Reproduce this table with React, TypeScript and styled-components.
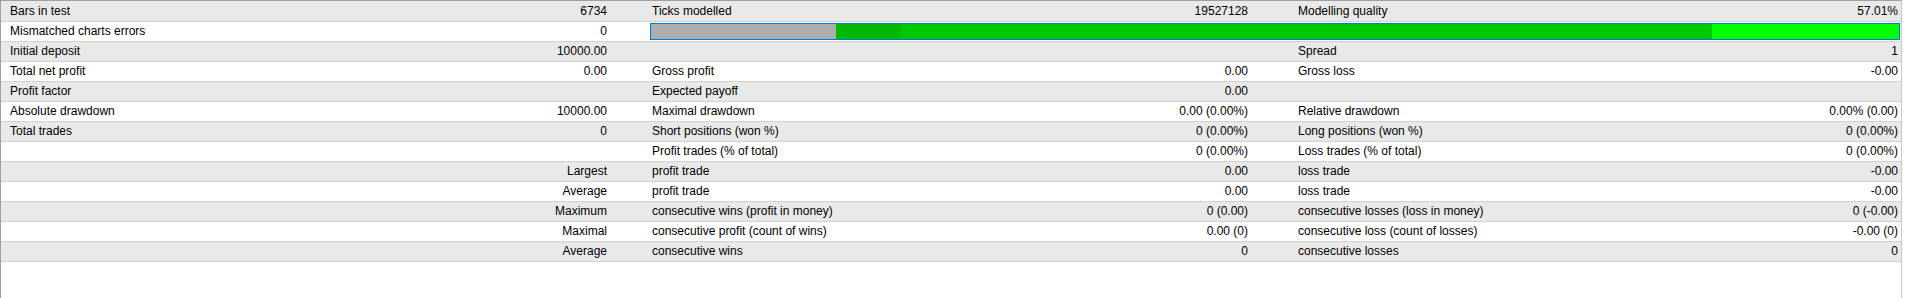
import React from "react";
import styled, { createGlobalStyle } from "styled-components";

const GlobalStyle = createGlobalStyle`
  html, body {
    margin: 0;
    padding: 0;
    background: #ffffff;
  }
  body {
    font-family: "Liberation Sans", Arial, sans-serif;
    font-size: 12px;
    color: #000000;
  }
`;

const Frame = styled.div`
  box-sizing: border-box;
  width: 1902px;
  height: 298px;
  background: #ffffff;
  border-left: 1px solid #a0a0a0;
  border-top: 1px solid #a0a0a0;
  border-right: 1px solid #c8c8c8;
  overflow: hidden;
`;

const Row = styled.div<{ $shaded: boolean }>`
  box-sizing: border-box;
  display: grid;
  grid-template-columns: 645px 646px 1fr;
  height: 20px;
  border-bottom: 1px solid #d2d2d2;
  background: ${(p) => (p.$shaded ? "#e9e9e9" : "#ffffff")};
  line-height: 19px;
  white-space: nowrap;

  &:first-child {
    height: 21px;
    padding-top: 1px;
  }
`;

const groupPad = [
  { l: 9, r: 39 },
  { l: 6, r: 44 },
  { l: 6, r: 3 },
];

const Group = styled.div<{ $col: number }>`
  display: flex;
  justify-content: space-between;
  align-items: center;
  min-width: 0;
  padding-left: ${(p) => groupPad[p.$col].l}px;
  padding-right: ${(p) => groupPad[p.$col].r}px;
`;

const Label = styled.span`
  text-align: left;
`;

const Value = styled.span`
  text-align: right;
  margin-left: auto;
`;

const BarCell = styled.div`
  grid-column: 2 / 4;
  box-sizing: border-box;
  display: flex;
  padding: 1px 1px 1px 4px;
`;

const Bar = styled.div`
  box-sizing: border-box;
  flex: 1;
  display: flex;
  height: 17px;
  border: 1px solid #0078d7;
`;

const Segment = styled.div<{ $color: string; $grow: number }>`
  flex: ${(p) => p.$grow} 1 0;
  background: ${(p) => p.$color};
`;

type Cell = [string, string];

const rows: Cell[][] = [
  [["Bars in test", "6734"], ["Ticks modelled", "19527128"], ["Modelling quality", "57.01%"]],
  [["Mismatched charts errors", "0"]],
  [["Initial deposit", "10000.00"], ["", ""], ["Spread", "1"]],
  [["Total net profit", "0.00"], ["Gross profit", "0.00"], ["Gross loss", "-0.00"]],
  [["Profit factor", ""], ["Expected payoff", "0.00"], ["", ""]],
  [["Absolute drawdown", "10000.00"], ["Maximal drawdown", "0.00 (0.00%)"], ["Relative drawdown", "0.00% (0.00)"]],
  [["Total trades", "0"], ["Short positions (won %)", "0 (0.00%)"], ["Long positions (won %)", "0 (0.00%)"]],
  [["", ""], ["Profit trades (% of total)", "0 (0.00%)"], ["Loss trades (% of total)", "0 (0.00%)"]],
  [["", "Largest"], ["profit trade", "0.00"], ["loss trade", "-0.00"]],
  [["", "Average"], ["profit trade", "0.00"], ["loss trade", "-0.00"]],
  [["", "Maximum"], ["consecutive wins (profit in money)", "0 (0.00)"], ["consecutive losses (loss in money)", "0 (-0.00)"]],
  [["", "Maximal"], ["consecutive profit (count of wins)", "0.00 (0)"], ["consecutive loss (count of losses)", "-0.00 (0)"]],
  [["", "Average"], ["consecutive wins", "0"], ["consecutive losses", "0"]],
];

const quality = [
  { color: "#adadad", width: 185 },
  { color: "#00b900", width: 65 },
  { color: "#00c800", width: 811 },
  { color: "#00ff00", width: 187 },
];

export default function App() {
  return (
    <>
      <GlobalStyle />
      <Frame>
        {rows.map((cells, i) => (
          <Row key={i} $shaded={i % 2 === 0}>
            {cells.map(([label, value], c) => (
              <Group key={c} $col={c}>
                <Label>{label}</Label>
                <Value>{value}</Value>
              </Group>
            ))}
            {i === 1 && (
              <BarCell>
                <Bar>
                  {quality.map((s, k) => (
                    <Segment key={k} $color={s.color} $grow={s.width} />
                  ))}
                </Bar>
              </BarCell>
            )}
          </Row>
        ))}
      </Frame>
    </>
  );
}
